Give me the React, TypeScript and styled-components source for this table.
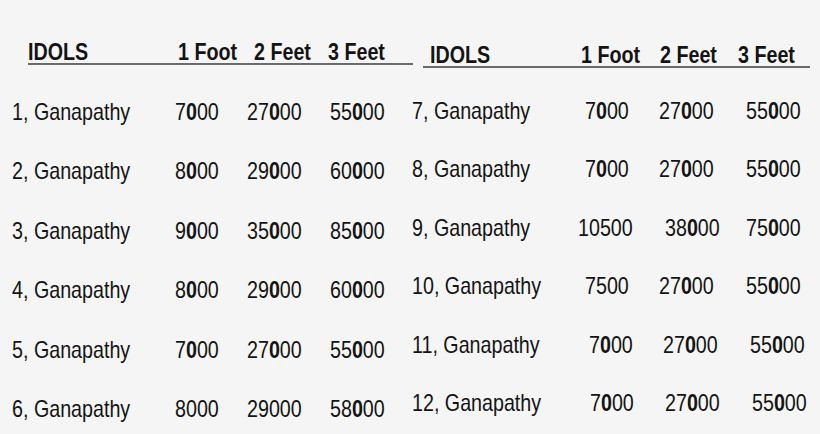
import React from "react"
import styled, { createGlobalStyle } from "styled-components"

const GlobalStyle = createGlobalStyle`
  html, body {
    margin: 0;
    padding: 0;
    background: #f5f5f5;
  }
  body {
    font-family: "Liberation Sans Narrow", "Arial Narrow", "Liberation Sans", Arial, sans-serif;
    color: #141414;
  }
`

const Page = styled.div`
  display: flex;
  align-items: flex-start;
  width: 820px;
  height: 434px;
  overflow: hidden;
`

const Table = styled.section<{ top: number; left: number; width: number }>`
  display: flex;
  flex-direction: column;
  padding-top: ${({ top }) => top}px;
  margin-left: ${({ left }) => left}px;
  width: ${({ width }) => width}px;
`

const HeadRow = styled.div<{ cols: string; indent: number; gap: number; lead: number }>`
  display: grid;
  grid-template-columns: ${({ cols }) => cols};
  height: 22px;
  line-height: 22px;
  margin-left: ${({ indent }) => indent}px;
  margin-bottom: ${({ gap }) => gap}px;
  padding-left: ${({ lead }) => lead}px;
  border-bottom: 2px solid #6a6a6a;
  font-size: 24px;
  font-weight: 700;
  white-space: nowrap;
`

const Row = styled.div<{ cols: string; h: number }>`
  display: grid;
  grid-template-columns: ${({ cols }) => cols};
  height: ${({ h }) => h}px;
  line-height: ${({ h }) => h}px;
  font-size: 24px;
  white-space: nowrap;
`

// the sheet is set in a condensed face; squeeze the regular one to match
const Cell = styled.span<{ offset?: number }>`
  display: inline-block;
  justify-self: start;
  margin-left: ${({ offset }) => offset || 0}px;
  transform: scaleX(0.82);
  transform-origin: 0 50%;

  b {
    font-weight: 700;
  }
`

type Price = { v: string; plain?: boolean; offset?: number }
type Line = { name: string; prices: Price[] }

const p = (v: string, plain = false, offset = 0): Price => ({ v, plain, offset })

// the hundreds digit is printed heavier in the source sheet
const Amount = ({ price }: { price: Price }) => {
  if (price.plain) return <Cell offset={price.offset}>{price.v}</Cell>
  const i = price.v.length - 3
  return (
    <Cell offset={price.offset}>
      {price.v.slice(0, i)}
      <b>{price.v[i]}</b>
      {price.v.slice(i + 1)}
    </Cell>
  )
}

const leftRows: Line[] = [
  { name: "1, Ganapathy", prices: [p("7000"), p("27000"), p("55000")] },
  { name: "2, Ganapathy", prices: [p("8000"), p("29000"), p("60000")] },
  { name: "3, Ganapathy", prices: [p("9000"), p("35000"), p("85000")] },
  { name: "4, Ganapathy", prices: [p("8000"), p("29000"), p("60000")] },
  { name: "5, Ganapathy", prices: [p("7000"), p("27000"), p("55000")] },
  { name: "6, Ganapathy", prices: [p("8000", true), p("29000", true), p("58000")] },
]

const rightRows: Line[] = [
  { name: "7, Ganapathy", prices: [p("7000"), p("27000"), p("55000")] },
  { name: "8, Ganapathy", prices: [p("7000"), p("27000"), p("55000")] },
  { name: "9, Ganapathy", prices: [p("10500", true, -7), p("38000", false, 6), p("75000")] },
  { name: "10, Ganapathy", prices: [p("7500", true), p("27000"), p("55000")] },
  { name: "11, Ganapathy", prices: [p("7000", false, 4), p("27000", false, 4), p("55000", false, 4)] },
  { name: "12, Ganapathy", prices: [p("7000", false, 5), p("27000", false, 6), p("55000", false, 6)] },
]

const heads = ["IDOLS", "1 Foot", "2 Feet", "3 Feet"]

export default function App() {
  return (
    <Page>
      <GlobalStyle />
      <Table top={41} left={12} width={401}>
        <HeadRow cols="150px 76px 74px 1fr" indent={16} gap={17} lead={0}>
          {heads.map(h => (
            <Cell key={h}>{h}</Cell>
          ))}
        </HeadRow>
        {leftRows.map(r => (
          <Row key={r.name} cols="163px 72px 83px 1fr" h={59.4}>
            <Cell>{r.name}</Cell>
            {r.prices.map((pr, i) => (
              <Amount key={i} price={pr} />
            ))}
          </Row>
        ))}
      </Table>
      <Table top={44} left={-1} width={398}>
        <HeadRow cols="151px 79px 78px 1fr" indent={11} gap={14} lead={7}>
          {heads.map(h => (
            <Cell key={h}>{h}</Cell>
          ))}
        </HeadRow>
        {rightRows.map(r => (
          <Row key={r.name} cols="173px 74px 87px 1fr" h={58.4}>
            <Cell>{r.name}</Cell>
            {r.prices.map((pr, i) => (
              <Amount key={i} price={pr} />
            ))}
          </Row>
        ))}
      </Table>
    </Page>
  )
}
